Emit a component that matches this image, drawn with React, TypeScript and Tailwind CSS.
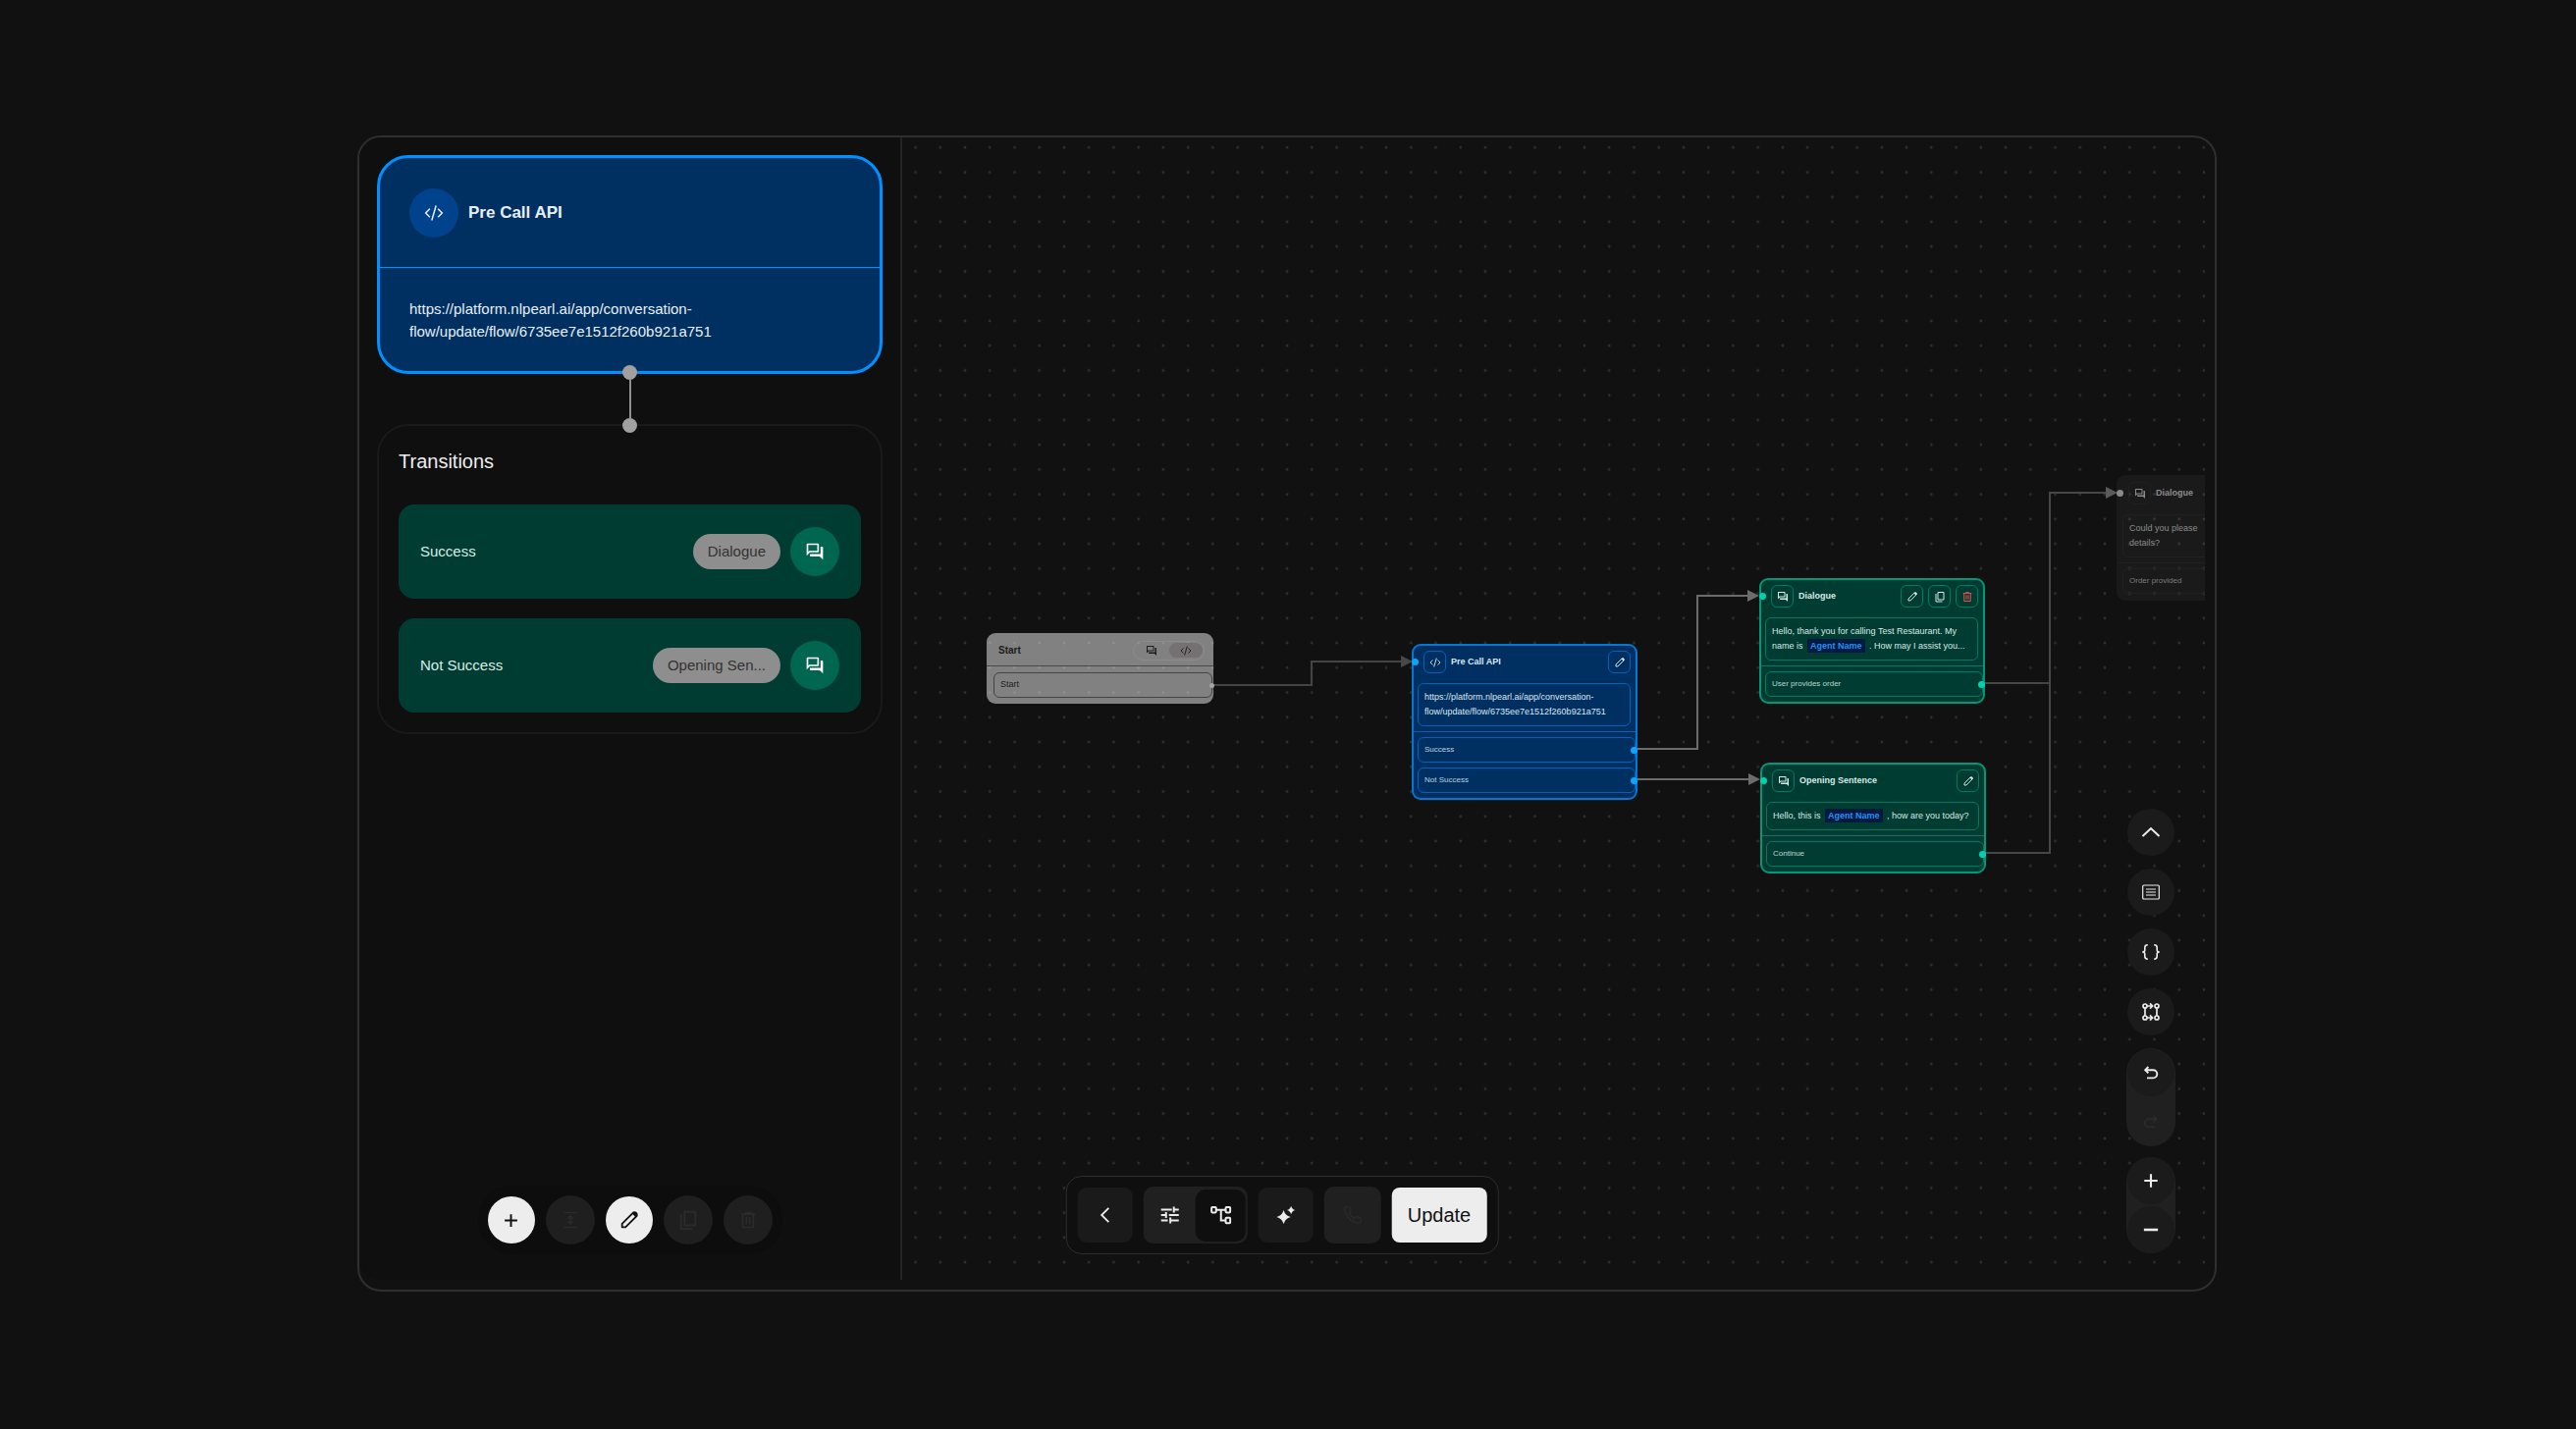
import React from "react";
import { MdOutlineForum } from "react-icons/md";

type IconProps = { className?: string };

function ForumIcon({ className }: IconProps) {
  return <MdOutlineForum className={className} aria-hidden="true" />;
}

function CodeIcon({ className }: IconProps) {
  return (
    <svg viewBox="0 0 24 24" className={className} fill="none" stroke="currentColor" strokeWidth="1.8" aria-hidden="true">
      <path d="M7 7 L2 12 L7 17 M17 7 L22 12 L17 17 M14.6 3 L9.4 21" />
    </svg>
  );
}

function PencilIcon({ className }: IconProps) {
  return (
    <svg viewBox="0 0 24 24" className={className} fill="none" stroke="currentColor" strokeWidth="2" aria-hidden="true">
      <path d="M4 20 L4 16.2 L16.6 3.6 L20.4 7.4 L7.8 20 Z" strokeLinejoin="round" />
      <path d="M16.9 2.9 Q18.3 1.8 19.7 3 L21 4.3 Q22.2 5.7 21 7.1 L19.2 8.9 L15.1 4.8 Z" fill="currentColor" stroke="none" />
    </svg>
  );
}

function CopyIcon({ className }: IconProps) {
  return (
    <svg viewBox="0 0 24 24" className={className} fill="none" stroke="currentColor" strokeWidth="2" aria-hidden="true">
      <path d="M8 3 H20 V18 H8 Z M4 6 V22 H17" strokeLinejoin="round" />
    </svg>
  );
}

function TrashIcon({ className }: IconProps) {
  return (
    <svg viewBox="0 0 24 24" className={className} fill="none" stroke="currentColor" strokeWidth="2" aria-hidden="true">
      <path d="M3.5 5 H20.5 M9 4.6 V3.4 H15 V4.6 M5.5 5 V21 H18.5 V5 M10 8.5 V17.5 M14 8.5 V17.5" />
    </svg>
  );
}

function ExpandIcon({ className }: IconProps) {
  return (
    <svg viewBox="0 0 24 24" className={className} fill="none" stroke="currentColor" strokeWidth="2" aria-hidden="true">
      <path d="M4 3 H20 M4 21 H20 M12 8 V16 M8.8 10.5 L12 7.3 L15.2 10.5 M8.8 13.5 L12 16.7 L15.2 13.5" />
    </svg>
  );
}

function PlusIcon({ className }: IconProps) {
  return (
    <svg viewBox="0 0 24 24" className={className} fill="none" stroke="currentColor" strokeWidth="2.8" aria-hidden="true">
      <path d="M12 3 V21 M3 12 H21" />
    </svg>
  );
}

function MinusIcon({ className }: IconProps) {
  return (
    <svg viewBox="0 0 24 24" className={className} fill="none" stroke="currentColor" strokeWidth="3.4" aria-hidden="true">
      <path d="M2.5 12 H21.5" />
    </svg>
  );
}

type Tone = "blue" | "green" | "dark";

const toneShell: Record<Tone, string> = {
  blue: "border-[#0078d8] bg-[#003062] text-[#dce8f5]",
  green: "border-[#009878] bg-[#003c31] text-[#d8ebe6]",
  dark: "border-transparent bg-white/4 text-[#8c8c8c]",
};

const toneLine: Record<Tone, string> = {
  blue: "border-[#0062b8]",
  green: "border-[#007a61]",
  dark: "border-[#212121]",
};

const toneHandle: Record<Tone, string> = {
  blue: "bg-[#0aa5ff]",
  green: "bg-[#00d2b0]",
  dark: "bg-[#8a8a8a]",
};

function Handle({ tone, side }: { tone: Tone; side: "in" | "out" }) {
  const place = side === "in" ? "-left-[2px] top-[13px]" : "-right-[3px] top-[9px]";
  return <span className={`absolute size-[7px] rounded-full ${place} ${toneHandle[tone]}`} />;
}

function NodeButton({ tone, label, children }: { tone: Tone; label: string; children: React.ReactNode }) {
  return (
    <button type="button" aria-label={label} className={`flex size-[23px] items-center justify-center rounded-md border ${toneLine[tone]}`}>
      {children}
    </button>
  );
}

function FlowNode({
  tone,
  place,
  title,
  icon,
  actions,
  body,
  rows,
}: {
  tone: Tone;
  place: string;
  title: string;
  icon: React.ReactNode;
  actions?: React.ReactNode;
  body: React.ReactNode;
  rows: string[];
}) {
  return (
    <article className={`absolute w-[230px] rounded-[9px] border-2 ${place} ${toneShell[tone]}`}>
      <Handle tone={tone} side="in" />
      <header className="flex items-center gap-[5px] pt-[5px] pr-[5px] pl-[10px]">
        <span className={`flex size-[23px] items-center justify-center rounded-md border ${toneLine[tone]}`}>{icon}</span>
        <h3 className="flex-1 text-[9px] font-bold whitespace-nowrap">{title}</h3>
        {actions}
      </header>
      <p className={`mt-[10px] mr-[5px] mb-[5px] ml-1 rounded-md border px-[6px] py-[6px] text-[9px] leading-[15px] whitespace-nowrap ${toneLine[tone]}`}>
        {body}
      </p>
      <div className={`flex flex-col gap-[5px] border-t py-[5px] pl-1 ${toneLine[tone]}`}>
        {rows.map((row) => (
          <div key={row} className={`relative flex h-[26px] items-center rounded-md border px-[6px] text-[8px] ${toneLine[tone]}`}>
            <span className="opacity-85">{row}</span>
            {tone !== "dark" && <Handle tone={tone} side="out" />}
          </div>
        ))}
      </div>
    </article>
  );
}

function AgentName() {
  return <span className="mx-[2px] bg-[#001a40] px-[3px] py-[2px] font-bold text-[#2a8ff5]">Agent Name</span>;
}

function StartNode() {
  return (
    <article className="absolute top-[505px] left-[86px] h-[72px] w-[231px] rounded-[9px] bg-white/47 text-[#1c1c1c]">
      <header className="flex h-[34px] items-center justify-between border-b border-[#4a4a4a] pt-[2px] pr-[9px] pl-3">
        <h3 className="text-[10px] font-bold">Start</h3>
        <div className="flex h-5 items-center gap-3 rounded-full border border-[#8c8c8c] pr-[1px] pl-3">
          <button type="button" aria-label="Dialogue start" className="flex w-3 justify-center">
            <ForumIcon className="size-3" />
          </button>
          <button type="button" aria-label="API start" className="flex h-[15px] w-[34px] items-center justify-center rounded-full bg-[#757071] text-[#1c1c1c]">
            <CodeIcon className="size-3" />
          </button>
        </div>
      </header>
      <div className="relative mt-[6px] mr-[1px] ml-[7px] flex h-[26px] items-center rounded-md border border-[#444444] px-[6px] text-[9px]">
        Start
        <span className="absolute top-[10px] -right-[3px] size-[5px] rounded-full bg-[#a5a5a5]" />
      </div>
    </article>
  );
}

function Edges() {
  return (
    <svg className="pointer-events-none absolute inset-0 size-full" aria-hidden="true">
      <defs>
        <pattern id="grid-dots" x="0.9" y="-2.3" width="25.24" height="25.24" patternUnits="userSpaceOnUse">
          <circle cx="12.62" cy="12.62" r="1.35" fill="#303030" />
        </pattern>
      </defs>
      <rect width="100%" height="100%" fill="url(#grid-dots)" />
      <g fill="none" strokeWidth="2">
        <path d="M317 558 H417 V534 H510" stroke="#444444" />
        <path d="M747 623 H810 V467 H862" stroke="#6c6c6c" />
        <path d="M747 654 H862" stroke="#6c6c6c" />
        <path d="M1101 556 H1169" stroke="#444444" />
        <path d="M1102 729 H1169 V362 H1226" stroke="#474747" />
      </g>
      <path d="M508 528 L520 534 L508 540 Z" fill="#474747" />
      <path d="M861 461 L873 467 L861 473 Z M862 648 L874 654 L862 660 Z" fill="#6c6c6c" />
      <path d="M1226 356 L1238 362 L1226 368 Z" fill="#5a5a5a" />
    </svg>
  );
}

function RoundTool({ label, children }: { label: string; children: React.ReactNode }) {
  return (
    <button type="button" aria-label={label} className="flex size-12 items-center justify-center rounded-full bg-[#1b1b1b] text-[#ececec]">
      {children}
    </button>
  );
}

function CanvasTools() {
  return (
    <div className="absolute right-[30px] bottom-[27px] flex flex-col items-center gap-[11px]">
      <div className="flex flex-col items-center gap-[13px]">
        <RoundTool label="Collapse">
          <svg viewBox="0 0 20 20" className="size-5" fill="none" stroke="currentColor" strokeWidth="2" aria-hidden="true">
            <path d="M1.5 14 L10 6 L18.5 14" />
          </svg>
        </RoundTool>
        <RoundTool label="Notes">
          <svg viewBox="0 0 20 20" className="size-5" fill="none" stroke="currentColor" strokeWidth="1.2" aria-hidden="true">
            <rect x="1.7" y="3" width="16.6" height="14" rx="1" />
            <path d="M5 7 H15 M5 10 H15 M5 13 H15" />
          </svg>
        </RoundTool>
        <RoundTool label="Variables">
          <svg viewBox="0 0 20 20" className="size-5" fill="none" stroke="currentColor" strokeWidth="1.6" aria-hidden="true">
            <path d="M6.8 2.8 Q3.8 2.8 3.8 5.4 V8 Q3.8 10 1.2 10 Q3.8 10 3.8 12 V14.6 Q3.8 17.2 6.8 17.2 M13.2 2.8 Q16.2 2.8 16.2 5.4 V8 Q16.2 10 18.8 10 Q16.2 10 16.2 12 V14.6 Q16.2 17.2 13.2 17.2" />
          </svg>
        </RoundTool>
        <RoundTool label="Arrange nodes">
          <svg viewBox="0 0 20 20" className="size-5" fill="none" stroke="currentColor" strokeWidth="1.7" aria-hidden="true">
            <circle cx="4" cy="4" r="2" />
            <circle cx="16" cy="4" r="2" />
            <circle cx="4" cy="16" r="2" />
            <circle cx="16" cy="16" r="2" />
            <path d="M4 6 V14 M16 6 V14 M6 4 H11 M6 16 H11 M9 1.4 L11.6 4 L9 6.6 M9 13.4 L11.6 16 L9 18.6" />
          </svg>
        </RoundTool>
        <div className="flex flex-col items-center gap-[2px] rounded-full bg-[#202020] p-[1px]">
          <RoundTool label="Undo">
            <svg viewBox="0 0 20 20" className="size-5" fill="none" stroke="currentColor" strokeWidth="1.9" aria-hidden="true">
              <path d="M7.4 4 L4.2 7.2 L7.4 10.4 M4.2 7.2 H12.2 A4 4 0 0 1 12.2 15.4 H6" />
            </svg>
          </RoundTool>
          <button type="button" disabled aria-label="Redo" className="flex size-12 items-center justify-center rounded-full text-[#2b2b2b]">
            <svg viewBox="0 0 20 20" className="size-5" fill="none" stroke="currentColor" strokeWidth="1.7" aria-hidden="true">
              <path d="M12.6 4 L15.8 7.2 L12.6 10.4 M15.8 7.2 H7.8 A4 4 0 0 0 7.8 15.4 H14" />
            </svg>
          </button>
        </div>
      </div>
      <div className="flex flex-col items-center gap-[2px] rounded-full bg-[#202020] px-[1px]">
        <RoundTool label="Zoom in">
          <PlusIcon className="size-[18px]" />
        </RoundTool>
        <RoundTool label="Zoom out">
          <MinusIcon className="size-[18px]" />
        </RoundTool>
      </div>
    </div>
  );
}

function Canvas() {
  return (
    <section aria-label="Conversation flow" className="relative flex-1 overflow-hidden">
      <Edges />
      <StartNode />
      <FlowNode
        tone="blue"
        place="left-[519px] top-[516px]"
        title="Pre Call API"
        icon={<CodeIcon className="size-3" />}
        actions={
          <NodeButton tone="blue" label="Edit Pre Call API">
            <PencilIcon className="size-3" />
          </NodeButton>
        }
        body={
          <>
            https://platform.nlpearl.ai/app/conversation-
            <br />
            flow/update/flow/6735ee7e1512f260b921a751
          </>
        }
        rows={["Success", "Not Success"]}
      />
      <FlowNode
        tone="green"
        place="left-[873px] top-[449px]"
        title="Dialogue"
        icon={<ForumIcon className="size-3" />}
        actions={
          <>
            <NodeButton tone="green" label="Edit Dialogue">
              <PencilIcon className="size-3" />
            </NodeButton>
            <NodeButton tone="green" label="Duplicate Dialogue">
              <CopyIcon className="size-3" />
            </NodeButton>
            <NodeButton tone="green" label="Delete Dialogue">
              <TrashIcon className="size-3 text-[#e8504e]" />
            </NodeButton>
          </>
        }
        body={
          <>
            Hello, thank you for calling Test Restaurant. My
            <br />
            name is <AgentName /> . How may I assist you...
          </>
        }
        rows={["User provides order"]}
      />
      <FlowNode
        tone="green"
        place="left-[874px] top-[637px]"
        title="Opening Sentence"
        icon={<ForumIcon className="size-3" />}
        actions={
          <NodeButton tone="green" label="Edit Opening Sentence">
            <PencilIcon className="size-3" />
          </NodeButton>
        }
        body={
          <>
            Hello, this is <AgentName /> , how are you today?
          </>
        }
        rows={["Continue"]}
      />
      <FlowNode
        tone="dark"
        place="left-[1237px] top-[344px]"
        title="Dialogue"
        icon={<ForumIcon className="size-3" />}
        body={
          <>
            Could you please
            <br />
            details?
          </>
        }
        rows={["Order provided"]}
      />
      <CanvasTools />
    </section>
  );
}

function TransitionRow({ name, target }: { name: string; target: string }) {
  return (
    <li className="flex h-24 items-center gap-[10px] rounded-2xl bg-[#003c31] px-[22px] text-[15px]">
      <span className="flex-1 text-[#d8ebe6]">{name}</span>
      <span className="rounded-full bg-[#8e8e8e] px-[15px] py-[6px] leading-6 text-[#333333]">{target}</span>
      <button type="button" aria-label={`Open ${target}`} className="flex size-[50px] items-center justify-center rounded-full bg-[#00664f] text-white">
        <ForumIcon className="size-5" />
      </button>
    </li>
  );
}

function PanelTool({ label, active, children }: { label: string; active?: boolean; children: React.ReactNode }) {
  const look = active ? "size-12 bg-[#ededed] text-[#111111]" : "size-[50px] bg-[#1f1f1f] text-[#2b2b2b]";
  return (
    <button type="button" aria-label={label} disabled={!active} className={`flex items-center justify-center rounded-full ${look}`}>
      {children}
    </button>
  );
}

function SidePanel() {
  return (
    <aside className="flex w-[553px] shrink-0 flex-col rounded-l-[22px] border-r-2 border-[#232323] bg-[#0f0f0f] px-[18px] pt-[18px] pb-[26px]">
      <section className="relative rounded-[32px] border-[3px] border-[#0091ff] bg-[#003062] text-[#e8eef5]">
        <header className="flex h-28 items-center gap-[10px] border-b border-[#0091ff] px-[30px]">
          <span className="flex size-[50px] items-center justify-center rounded-full bg-[#00428c]">
            <CodeIcon className="size-5" />
          </span>
          <h2 className="text-[17px] font-bold">Pre Call API</h2>
        </header>
        <p className="px-[30px] pt-[30px] pb-[29px] text-[15px] leading-[23px]">
          https://platform.nlpearl.ai/app/conversation-
          <br />
          flow/update/flow/6735ee7e1512f260b921a751
        </p>
      </section>
      <div className="relative z-10 -my-[9px] flex flex-col items-center">
        <span className="size-[15px] rounded-full bg-[#a0a0a0]" />
        <span className="h-[39px] w-[2px] bg-[#8f8f8f]" />
        <span className="size-[15px] rounded-full bg-[#a0a0a0]" />
      </div>
      <section className="rounded-[32px] border-2 border-[#1a1a1a] px-5 pt-[22px] pb-5">
        <h2 className="text-[20px] leading-7 text-[#ededed]">Transitions</h2>
        <ul className="mt-[30px] flex flex-col gap-5">
          <TransitionRow name="Success" target="Dialogue" />
          <TransitionRow name="Not Success" target="Opening Sen..." />
        </ul>
      </section>
      <div className="mt-auto flex items-center gap-[11px] self-center rounded-full bg-[#0d0d0d] p-[10px]">
        <PanelTool label="Add transition" active>
          <PlusIcon className="size-[17px]" />
        </PanelTool>
        <PanelTool label="Resize">
          <ExpandIcon className="size-5" />
        </PanelTool>
        <PanelTool label="Edit node" active>
          <PencilIcon className="size-[22px]" />
        </PanelTool>
        <PanelTool label="Duplicate node">
          <CopyIcon className="size-[22px]" />
        </PanelTool>
        <PanelTool label="Delete node">
          <TrashIcon className="size-5" />
        </PanelTool>
      </div>
    </aside>
  );
}

function ActionBar() {
  return (
    <div className="absolute bottom-[26px] left-1/2 flex -translate-x-1/2 items-center gap-[11px] rounded-2xl border border-[#2e2e2e] bg-[#0f0f0f] px-[11px] py-[10px]">
      <button type="button" aria-label="Back" className="flex size-14 items-center justify-center rounded-[9px] bg-[#1a1a1a] text-[#ececec]">
        <svg viewBox="0 0 20 20" className="size-5" fill="none" stroke="currentColor" strokeWidth="1.8" aria-hidden="true">
          <path d="M13.6 2.8 L6.4 10 L13.6 17.2" />
        </svg>
      </button>
      <div className="flex h-[58px] items-center rounded-[10px] bg-[#202020] pr-[2px] text-[#ececec]">
        <button type="button" aria-label="Settings" className="flex h-[53px] w-[53px] items-center justify-center">
          <svg viewBox="0 0 20 20" className="size-5" fill="none" stroke="currentColor" strokeWidth="2" aria-hidden="true">
            <path d="M1 4.4 H12 M14 1.4 V7.4 M14 4.4 H19 M1 10 H6 M6 7 V13 M9 10 H19 M1 15.6 H7.8 M10.4 12.6 V18.6 M10.4 15.6 H19" />
          </svg>
        </button>
        <button type="button" aria-label="Flow view" className="flex h-[53px] w-[51px] items-center justify-center rounded-[10px] bg-[#0f0f0f]">
          <svg viewBox="0 0 22 20" className="h-5 w-[22px]" fill="none" stroke="currentColor" strokeWidth="2" aria-hidden="true">
            <rect x="1.4" y="2" width="4.6" height="5.4" rx="0.8" />
            <rect x="15.8" y="2" width="4.6" height="5.4" rx="0.8" />
            <rect x="15.8" y="12.8" width="4.6" height="5.4" rx="0.8" />
            <path d="M6 4.7 H15.8 M11 4.7 V15.5 H15.8" />
          </svg>
        </button>
      </div>
      <button type="button" aria-label="Improve with AI" className="flex size-14 items-center justify-center rounded-[9px] bg-[#1a1a1a] text-[#ececec]">
        <svg viewBox="0 0 20 20" className="size-5" fill="currentColor" aria-hidden="true">
          <path d="M7.8 5 Q9.4 10.6 15 12 Q9.4 13.4 7.8 19 Q6.2 13.4 0.6 12 Q6.2 10.6 7.8 5 Z M15.4 0.8 Q16.3 4.2 19.6 5 Q16.3 5.800 15.4 9.2 Q14.5 5.800 11.2 5 Q14.5 4.2 15.4 0.8 Z" />
        </svg>
      </button>
      <button type="button" disabled aria-label="Call" className="flex size-[58px] items-center justify-center rounded-[10px] bg-[#202020] text-[#292929]">
        <svg viewBox="0 0 24 24" className="size-5" fill="none" stroke="currentColor" strokeWidth="1.8" aria-hidden="true">
          <path d="M22 16.9v3a2 2 0 0 1-2.2 2 19.8 19.8 0 0 1-17.7-17.7A2 2 0 0 1 4.1 2h3a2 2 0 0 1 2 1.7c.1 1 .4 1.9.7 2.8a2 2 0 0 1-.5 2.1L8.100 9.900a16 16 0 0 0 6 6l1.300-1.300a2 2 0 0 1 2.100-.4c.9.3 1.800.6 2.800.7a2 2 0 0 1 1.700 2Z" />
        </svg>
      </button>
      <button type="button" className="h-14 rounded-lg bg-[#ededed] px-4 text-[20px] text-[#111111]">
        Update
      </button>
    </div>
  );
}

export default function App() {
  return (
    <main className="flex min-h-screen bg-[#111111] pt-[138px] pr-[366px] pb-[140px] pl-[364px] font-['Liberation_Sans',Arial,sans-serif]">
      <div className="flex flex-1 rounded-3xl border-2 border-[#2f2f2f] pr-[10px] pb-[10px]">
        <div className="relative flex flex-1">
          <SidePanel />
          <Canvas />
          <ActionBar />
        </div>
      </div>
    </main>
  );
}
